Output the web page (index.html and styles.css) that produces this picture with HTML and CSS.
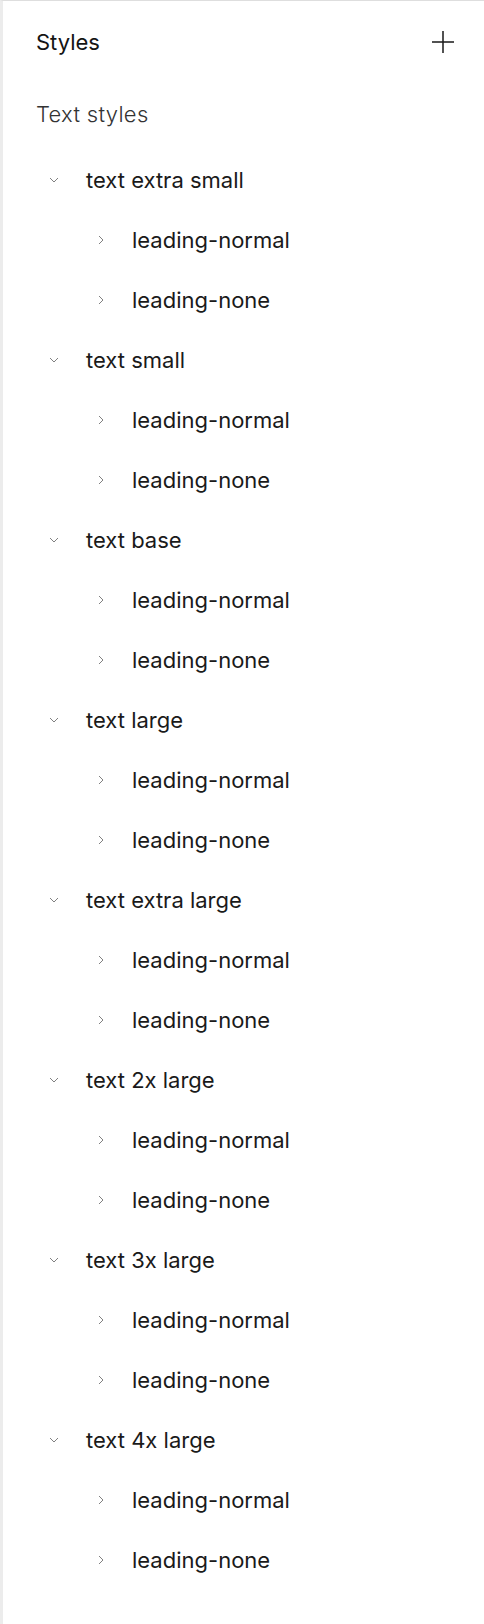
FILE: index.html
```html
<!DOCTYPE html>
<html lang="en">
<head>
<meta charset="utf-8">
<title>Styles</title>
<link rel="stylesheet" href="styles.css">
</head>
<body>
<div class="panel">
  <div class="header">
    <span class="title">Styles</span>
    <button class="add" aria-label="Add style">
      <svg width="22" height="22" viewBox="0 0 22 22"><path d="M11 0V22M0 11H22" stroke="#1a1a1a" stroke-width="1.5" fill="none"/></svg>
    </button>
  </div>
  <div class="section">Text styles</div>
  <ul class="tree">
    <li class="group"><div class="row"><span class="chev"><svg width="10" height="10" viewBox="0 0 10 10"><path d="M1 3L5 7L9 3" stroke="#808080" stroke-width="1" fill="none"/></svg></span><span>text extra small</span></div>
      <ul class="sub">
        <li class="row"><span class="chev"><svg width="10" height="10" viewBox="0 0 10 10"><path d="M3 1L7 5L3 9" stroke="#808080" stroke-width="1" fill="none"/></svg></span><span>leading-normal</span></li>
        <li class="row"><span class="chev"><svg width="10" height="10" viewBox="0 0 10 10"><path d="M3 1L7 5L3 9" stroke="#808080" stroke-width="1" fill="none"/></svg></span><span>leading-none</span></li>
      </ul>
    </li>
    <li class="group"><div class="row"><span class="chev"><svg width="10" height="10" viewBox="0 0 10 10"><path d="M1 3L5 7L9 3" stroke="#808080" stroke-width="1" fill="none"/></svg></span><span>text small</span></div>
      <ul class="sub">
        <li class="row"><span class="chev"><svg width="10" height="10" viewBox="0 0 10 10"><path d="M3 1L7 5L3 9" stroke="#808080" stroke-width="1" fill="none"/></svg></span><span>leading-normal</span></li>
        <li class="row"><span class="chev"><svg width="10" height="10" viewBox="0 0 10 10"><path d="M3 1L7 5L3 9" stroke="#808080" stroke-width="1" fill="none"/></svg></span><span>leading-none</span></li>
      </ul>
    </li>
    <li class="group"><div class="row"><span class="chev"><svg width="10" height="10" viewBox="0 0 10 10"><path d="M1 3L5 7L9 3" stroke="#808080" stroke-width="1" fill="none"/></svg></span><span>text base</span></div>
      <ul class="sub">
        <li class="row"><span class="chev"><svg width="10" height="10" viewBox="0 0 10 10"><path d="M3 1L7 5L3 9" stroke="#808080" stroke-width="1" fill="none"/></svg></span><span>leading-normal</span></li>
        <li class="row"><span class="chev"><svg width="10" height="10" viewBox="0 0 10 10"><path d="M3 1L7 5L3 9" stroke="#808080" stroke-width="1" fill="none"/></svg></span><span>leading-none</span></li>
      </ul>
    </li>
    <li class="group"><div class="row"><span class="chev"><svg width="10" height="10" viewBox="0 0 10 10"><path d="M1 3L5 7L9 3" stroke="#808080" stroke-width="1" fill="none"/></svg></span><span>text large</span></div>
      <ul class="sub">
        <li class="row"><span class="chev"><svg width="10" height="10" viewBox="0 0 10 10"><path d="M3 1L7 5L3 9" stroke="#808080" stroke-width="1" fill="none"/></svg></span><span>leading-normal</span></li>
        <li class="row"><span class="chev"><svg width="10" height="10" viewBox="0 0 10 10"><path d="M3 1L7 5L3 9" stroke="#808080" stroke-width="1" fill="none"/></svg></span><span>leading-none</span></li>
      </ul>
    </li>
    <li class="group"><div class="row"><span class="chev"><svg width="10" height="10" viewBox="0 0 10 10"><path d="M1 3L5 7L9 3" stroke="#808080" stroke-width="1" fill="none"/></svg></span><span>text extra large</span></div>
      <ul class="sub">
        <li class="row"><span class="chev"><svg width="10" height="10" viewBox="0 0 10 10"><path d="M3 1L7 5L3 9" stroke="#808080" stroke-width="1" fill="none"/></svg></span><span>leading-normal</span></li>
        <li class="row"><span class="chev"><svg width="10" height="10" viewBox="0 0 10 10"><path d="M3 1L7 5L3 9" stroke="#808080" stroke-width="1" fill="none"/></svg></span><span>leading-none</span></li>
      </ul>
    </li>
    <li class="group"><div class="row"><span class="chev"><svg width="10" height="10" viewBox="0 0 10 10"><path d="M1 3L5 7L9 3" stroke="#808080" stroke-width="1" fill="none"/></svg></span><span>text 2x large</span></div>
      <ul class="sub">
        <li class="row"><span class="chev"><svg width="10" height="10" viewBox="0 0 10 10"><path d="M3 1L7 5L3 9" stroke="#808080" stroke-width="1" fill="none"/></svg></span><span>leading-normal</span></li>
        <li class="row"><span class="chev"><svg width="10" height="10" viewBox="0 0 10 10"><path d="M3 1L7 5L3 9" stroke="#808080" stroke-width="1" fill="none"/></svg></span><span>leading-none</span></li>
      </ul>
    </li>
    <li class="group"><div class="row"><span class="chev"><svg width="10" height="10" viewBox="0 0 10 10"><path d="M1 3L5 7L9 3" stroke="#808080" stroke-width="1" fill="none"/></svg></span><span>text 3x large</span></div>
      <ul class="sub">
        <li class="row"><span class="chev"><svg width="10" height="10" viewBox="0 0 10 10"><path d="M3 1L7 5L3 9" stroke="#808080" stroke-width="1" fill="none"/></svg></span><span>leading-normal</span></li>
        <li class="row"><span class="chev"><svg width="10" height="10" viewBox="0 0 10 10"><path d="M3 1L7 5L3 9" stroke="#808080" stroke-width="1" fill="none"/></svg></span><span>leading-none</span></li>
      </ul>
    </li>
    <li class="group"><div class="row"><span class="chev"><svg width="10" height="10" viewBox="0 0 10 10"><path d="M1 3L5 7L9 3" stroke="#808080" stroke-width="1" fill="none"/></svg></span><span>text 4x large</span></div>
      <ul class="sub">
        <li class="row"><span class="chev"><svg width="10" height="10" viewBox="0 0 10 10"><path d="M3 1L7 5L3 9" stroke="#808080" stroke-width="1" fill="none"/></svg></span><span>leading-normal</span></li>
        <li class="row"><span class="chev"><svg width="10" height="10" viewBox="0 0 10 10"><path d="M3 1L7 5L3 9" stroke="#808080" stroke-width="1" fill="none"/></svg></span><span>leading-none</span></li>
      </ul>
    </li>
  </ul>
</div>
</body>
</html>
```
FILE: styles.css
```css
html, body {
  margin: 0;
  padding: 0;
  background: #ffffff;
}

.panel {
  box-sizing: border-box;
  min-height: 1624px;
  border-top: 1px solid #dedede;
  border-left: 3px solid #ececec;
  padding: 11px 0 0 33px;
  font-family: Inter, "Noto Sans", sans-serif;
  font-size: 22px;
  color: #1a1a1a;
}

.header {
  display: flex;
  align-items: center;
  justify-content: space-between;
  height: 60px;
  line-height: 60px;
  padding-right: 30px;
}

.title {
  font-weight: 400;
  color: #141414;
}

.add {
  display: flex;
  align-items: center;
  justify-content: center;
  width: 22px;
  height: 22px;
  padding: 0;
  margin: 0;
  border: 0;
  background: none;
}

.add svg {
  display: block;
}

.section {
  margin-top: 12px;
  height: 60px;
  line-height: 60px;
  color: #333333;
  font-weight: 300;
  letter-spacing: 0.3px;
}

.tree, .sub {
  list-style: none;
  margin: 0;
  padding: 0;
}

.tree {
  margin-top: 6px;
}

.row {
  display: flex;
  align-items: center;
  height: 60px;
  line-height: 60px;
}

.chev {
  display: flex;
  align-items: center;
  justify-content: center;
  width: 10px;
  height: 10px;
  margin-left: 13px;
  margin-right: 27px;
}

.chev svg {
  display: block;
}

.sub .row {
  padding-left: 44px;
}

.sub .chev {
  margin-left: 16px;
  margin-right: 26px;
}
```
